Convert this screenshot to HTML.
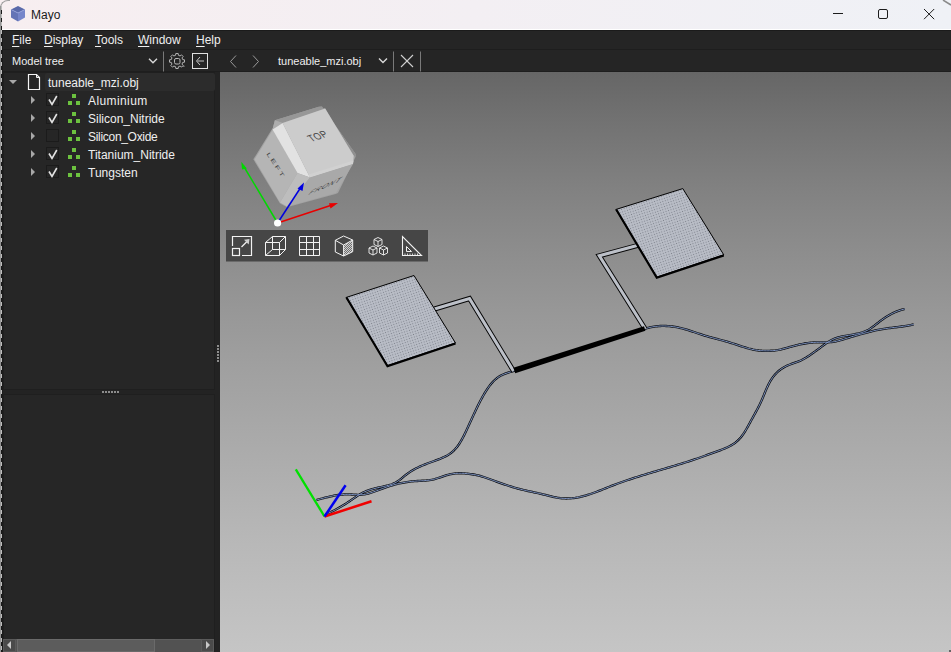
<!DOCTYPE html>
<html><head><meta charset="utf-8">
<style>
*{margin:0;padding:0;box-sizing:border-box}
html,body{width:951px;height:652px;overflow:hidden;background:#232323}
body{position:relative;font-family:"Liberation Sans",sans-serif;font-size:12px;color:#efefef}
.abs{position:absolute}
#title{left:0;top:0;width:951px;height:30px;background:linear-gradient(90deg,#f7eef0 0%,#f3eff3 50%,#eff1f6 100%);border-bottom:1px solid #ffffff}
#title .t{left:31px;top:8px;color:#1a1a1a;font-size:12px}
#menubar{left:0;top:30px;width:951px;height:20px;background:#252525;border-top:1px solid #1b1b1b;border-bottom:1px solid #1e1e1e}
#menubar span{position:absolute;top:2px;white-space:nowrap}
#toolbar{left:0;top:50px;width:951px;height:22px;background:#252525;border-bottom:1px solid #1e1e1e}
#leftpanel{left:0;top:72px;width:220px;height:580px;background:#232323}
#vp{left:220px;top:72px;width:731px;height:580px;background:linear-gradient(180deg,#666666 0%,#747474 10%,#818181 20%,#8c8c8c 30%,#969696 40%,#9f9f9f 50%,#a7a7a7 60%,#afafaf 70%,#b7b7b7 80%,#bebebe 90%,#c5c5c5 100%);overflow:hidden}
.row{position:absolute;white-space:nowrap}
.u{text-decoration:underline;text-underline-offset:2px;text-decoration-thickness:1.3px}
</style></head>
<body>
<div id="title" class="abs">
  <svg class="abs" style="left:11px;top:6px" width="15" height="16" viewBox="0 0 15 16">
    <polygon points="7,0 14,3.5 7,7 0,3.5" fill="#5a6aaa"/>
    <polygon points="0,3.5 7,7 7,15.5 0,11.5" fill="#6474b6"/>
    <polygon points="7,7 14,3.5 14,11.5 7,15.5" fill="#7686ca"/>
    <path d="M0.3,3.6 L7,7 L13.7,3.6" fill="none" stroke="#95a3dc" stroke-width="0.8"/>
  </svg>
  <svg class="abs" style="left:820px;top:0" width="131" height="30" viewBox="820 0 131 30">
    <line x1="833" y1="13.5" x2="843" y2="13.5" stroke="#1c1c1c" stroke-width="1"/>
    <rect x="878.5" y="9.5" width="9" height="9" rx="1.5" fill="none" stroke="#1c1c1c" stroke-width="1"/>
    <path d="M924,9 L934.2,19.2 M934.2,9 L924,19.2" stroke="#1c1c1c" stroke-width="1"/>
    <path d="M943,0 L951,5" stroke="#8a8a8a" stroke-width="1.5"/>
  </svg>
  <div class="abs t">Mayo</div>
</div>
<div id="menubar" class="abs">
  <span style="left:12px"><span style="position:static" class="u">F</span>ile</span>
  <span style="left:44px"><span style="position:static" class="u">D</span>isplay</span>
  <span style="left:95px"><span style="position:static" class="u">T</span>ools</span>
  <span style="left:138px"><span style="position:static" class="u">W</span>indow</span>
  <span style="left:196px"><span style="position:static" class="u">H</span>elp</span>
</div>
<div id="toolbar" class="abs">
  <div class="abs" style="left:12px;top:5px;white-space:nowrap;font-size:11px">Model tree</div>
  <svg class="abs" style="left:0;top:0" width="951" height="22" viewBox="0 50 951 22">
    <g fill="none" stroke-linecap="square">
      <polyline points="149.5,59.2 153,62.7 156.5,59.2" stroke="#d8d8d8" stroke-width="1.4"/>
      <line x1="163.5" y1="52" x2="163.5" y2="71" stroke="#7a7a7a" stroke-width="1"/>
      <rect x="192.5" y="53.5" width="15" height="15" stroke="#e0e0e0" stroke-width="1"/>
      <polyline points="200,57 196.5,61 200,65" stroke="#c8c8c8" stroke-width="1" stroke-linecap="butt"/>
      <line x1="197" y1="61" x2="204" y2="61" stroke="#8a8a8a" stroke-width="1.6" stroke-linecap="butt"/>
      <polyline points="236,55.5 230.5,61.5 236,67.5" stroke="#9a9a9a" stroke-width="1" stroke-linecap="butt"/>
      <polyline points="253,55.5 258.5,61.5 253,67.5" stroke="#9a9a9a" stroke-width="1" stroke-linecap="butt"/>
      <polyline points="379.5,59 383,62.5 386.5,59" stroke="#d8d8d8" stroke-width="1.4"/>
      <line x1="393.5" y1="52" x2="393.5" y2="71" stroke="#7a7a7a" stroke-width="1"/>
      <line x1="401" y1="55" x2="413" y2="67" stroke="#d0d0d0" stroke-width="1.1" stroke-linecap="butt"/>
      <line x1="413" y1="55" x2="401" y2="67" stroke="#d0d0d0" stroke-width="1.1" stroke-linecap="butt"/>
      <line x1="420.5" y1="52" x2="420.5" y2="71" stroke="#7a7a7a" stroke-width="1"/>
    </g>
    <path id="gear" fill="none" stroke="#b4b4b4" stroke-width="1" d="M182.74,59.62 L184.51,59.81 L184.51,62.19 L182.74,62.38 L182.03,64.08 L183.15,65.47 L181.47,67.15 L180.08,66.03 L178.38,66.74 L178.19,68.51 L175.81,68.51 L175.62,66.74 L173.92,66.03 L172.53,67.15 L170.85,65.47 L171.97,64.08 L171.26,62.38 L169.49,62.19 L169.49,59.81 L171.26,59.62 L171.97,57.92 L170.85,56.53 L172.53,54.85 L173.92,55.97 L175.62,55.26 L175.81,53.49 L178.19,53.49 L178.38,55.26 L180.08,55.97 L181.47,54.85 L183.15,56.53 L182.03,57.92Z"/>
    <rect x="174.5" y="58.5" width="5.5" height="5.5" rx="1.5" fill="none" stroke="#b8b8b8" stroke-width="1"/>
    <path d="M181,67 l3,-1.5 l1,1 z" fill="#9a9a9a"/>
  </svg>
  <div class="abs" style="left:278px;top:5px;white-space:nowrap;font-size:11px">tuneable_mzi.obj</div>
</div>
<div id="leftpanel" class="abs">
  <div class="abs" style="left:3px;top:0;width:212px;height:318px;background:#262626;border:1px solid #1f1f1f"></div>
  <div class="abs" style="left:3px;top:322px;width:212px;height:258px;background:#262626;border:1px solid #1f1f1f"></div>
  <div class="abs" style="left:45px;top:1px;width:170px;height:18px;background:#2c2c2c;border-radius:2px"></div>
  <svg class="abs" style="left:0;top:0" width="220" height="580" viewBox="0 0 220 580">
    <polygon points="9,8 17,8 13,12" fill="#a8a8a8"/>
    <path d="M28.5,2.5 H36.5 L39.5,5.5 V17.5 H28.5 Z" fill="none" stroke="#f4f4f4" stroke-width="1.2"/>
    <path d="M36.5,2.5 V5.5 H39.5" fill="none" stroke="#f4f4f4" stroke-width="1"/>
    <polygon points="31,24 35,28 31,32" fill="#a8a8a8"/><rect x="46.5" y="21.5" width="12" height="12" fill="#262626" stroke="#1b1b1b" stroke-width="1"/><polyline points="49,27.5 52,32.5 56.8,24" fill="none" stroke="#e2e2e2" stroke-width="1.6" stroke-linejoin="miter"/><rect x="72" y="22" width="4" height="4" fill="#6cc23f"/><rect x="68" y="29" width="4" height="4" fill="#6cc23f"/><rect x="76" y="29" width="4" height="4" fill="#6cc23f"/><polygon points="31,42 35,46 31,50" fill="#a8a8a8"/><rect x="46.5" y="39.5" width="12" height="12" fill="#262626" stroke="#1b1b1b" stroke-width="1"/><polyline points="49,45.5 52,50.5 56.8,42" fill="none" stroke="#e2e2e2" stroke-width="1.6" stroke-linejoin="miter"/><rect x="72" y="40" width="4" height="4" fill="#6cc23f"/><rect x="68" y="47" width="4" height="4" fill="#6cc23f"/><rect x="76" y="47" width="4" height="4" fill="#6cc23f"/><polygon points="31,60 35,64 31,68" fill="#a8a8a8"/><rect x="46.5" y="57.5" width="12" height="12" fill="#262626" stroke="#1b1b1b" stroke-width="1"/><rect x="72" y="58" width="4" height="4" fill="#6cc23f"/><rect x="68" y="65" width="4" height="4" fill="#6cc23f"/><rect x="76" y="65" width="4" height="4" fill="#6cc23f"/><polygon points="31,78 35,82 31,86" fill="#a8a8a8"/><rect x="46.5" y="75.5" width="12" height="12" fill="#262626" stroke="#1b1b1b" stroke-width="1"/><polyline points="49,81.5 52,86.5 56.8,78" fill="none" stroke="#e2e2e2" stroke-width="1.6" stroke-linejoin="miter"/><rect x="72" y="76" width="4" height="4" fill="#6cc23f"/><rect x="68" y="83" width="4" height="4" fill="#6cc23f"/><rect x="76" y="83" width="4" height="4" fill="#6cc23f"/><polygon points="31,96 35,100 31,104" fill="#a8a8a8"/><rect x="46.5" y="93.5" width="12" height="12" fill="#262626" stroke="#1b1b1b" stroke-width="1"/><polyline points="49,99.5 52,104.5 56.8,96" fill="none" stroke="#e2e2e2" stroke-width="1.6" stroke-linejoin="miter"/><rect x="72" y="94" width="4" height="4" fill="#6cc23f"/><rect x="68" y="101" width="4" height="4" fill="#6cc23f"/><rect x="76" y="101" width="4" height="4" fill="#6cc23f"/>
    <g fill="#8c8c8c"><rect x="217" y="273" width="2" height="2"/><rect x="217" y="276" width="2" height="2"/><rect x="217" y="279" width="2" height="2"/><rect x="217" y="282" width="2" height="2"/><rect x="217" y="285" width="2" height="2"/><rect x="217" y="288" width="2" height="2"/></g>
    <g fill="#8c8c8c"><rect x="102" y="319" width="2" height="2"/><rect x="105" y="319" width="2" height="2"/><rect x="108" y="319" width="2" height="2"/><rect x="111" y="319" width="2" height="2"/><rect x="114" y="319" width="2" height="2"/><rect x="117" y="319" width="2" height="2"/></g>
  </svg>
  <div class="row" style="left:48px;top:4px">tuneable_mzi.obj</div>
  <div class="row" style="left:88px;top:22px;letter-spacing:0.4px">Aluminium</div><div class="row" style="left:88px;top:40px">Silicon_Nitride</div><div class="row" style="left:88px;top:58px;letter-spacing:-0.3px">Silicon_Oxide</div><div class="row" style="left:88px;top:76px">Titanium_Nitride</div><div class="row" style="left:88px;top:94px">Tungsten</div>
  <div class="abs" style="left:3px;top:567px;width:211px;height:13px;background:#525252;border-top:1px solid #5e5e5e"></div>
  <div class="abs" style="left:3px;top:567px;width:13px;height:13px;background:#4a4a4a;border:1px solid #5a5a5a"></div>
  <div class="abs" style="left:17px;top:567px;width:138px;height:13px;background:#5c5c5c;border:1px solid #6a6a6a"></div>
  <div class="abs" style="left:201px;top:567px;width:13px;height:13px;background:#4a4a4a;border:1px solid #5a5a5a"></div>
  <svg class="abs" style="left:0;top:0" width="220" height="580" viewBox="0 0 220 580">
    <polygon points="7,573 11,569 11,577" fill="#c8c8c8"/>
    <polygon points="210,573 206,569 206,577" fill="#c8c8c8"/>
  </svg>
</div>
<div id="vp" class="abs">
<!--SCENE-->
<svg class="abs" style="left:0;top:0" width="731" height="580" viewBox="220 72 731 580">
<defs><pattern id="dots" width="2.6" height="2.6" patternUnits="userSpaceOnUse" patternTransform="rotate(-18)"><rect width="2.6" height="2.6" fill="#b9bdc7"/><rect x="0.8" y="0.8" width="1" height="1" fill="#7d818a"/></pattern></defs>
<path d="M325.80,514.20 L327.19,513.63 L328.58,513.04 L329.96,512.43 L331.32,511.80 L332.68,511.15 L334.03,510.48 L335.37,509.79 L336.70,509.08 L338.02,508.35 L339.33,507.61 L340.63,506.85 L341.92,506.08 L343.21,505.30 L344.49,504.51 L345.76,503.70 L347.03,502.88 L348.29,502.06 L349.54,501.23 L350.79,500.38 L352.04,499.54 L353.28,498.68 L354.51,497.82 L355.75,496.96 L356.99,496.11 L358.25,495.28 L359.52,494.47 L360.82,493.71 L362.14,492.99 L363.49,492.32 L364.86,491.70 L366.25,491.12 L367.66,490.59 L369.08,490.09 L370.52,489.63 L371.96,489.20 L373.41,488.80 L374.87,488.42 L376.33,488.06 L377.80,487.72 L379.27,487.39 L380.74,487.07 L382.21,486.75 L383.68,486.43 L385.15,486.09 L386.61,485.74 L388.07,485.36 L389.52,484.94 L390.95,484.48 L392.37,483.97 L393.76,483.40 L395.13,482.77 L396.46,482.06 L397.74,481.28 L398.98,480.42 L400.19,479.52 L401.37,478.58 L402.53,477.62 L403.68,476.66 L404.85,475.70 L406.03,474.76 L407.23,473.86 L408.46,472.98 L409.70,472.14 L410.97,471.32 L412.25,470.54 L413.56,469.78 L414.87,469.05 L416.20,468.35 L417.55,467.67 L418.91,467.02 L420.28,466.39 L421.65,465.78 L423.04,465.20 L424.44,464.63 L425.84,464.08 L427.24,463.54 L428.65,463.01 L430.07,462.49 L431.48,461.98 L432.90,461.47 L434.32,460.96 L435.74,460.45 L437.15,459.93 L438.56,459.39 L439.96,458.85 L441.35,458.27 L442.73,457.67 L444.10,457.05 L445.45,456.38 L446.78,455.67 L448.09,454.92 L449.36,454.11 L450.60,453.25 L451.79,452.34 L452.93,451.36 L454.03,450.32 L455.07,449.24 L456.07,448.11 L457.02,446.94 L457.92,445.73 L458.79,444.50 L459.62,443.25 L460.42,441.97 L461.18,440.67 L461.92,439.36 L462.64,438.04 L463.34,436.70 L464.02,435.36 L464.68,434.01 L465.34,432.65 L465.99,431.29 L466.63,429.93 L467.27,428.57 L467.91,427.20 L468.54,425.83 L469.17,424.47 L469.80,423.10 L470.43,421.73 L471.06,420.36 L471.68,418.99 L472.31,417.62 L472.94,416.25 L473.57,414.89 L474.20,413.52 L474.84,412.15 L475.47,410.79 L476.12,409.43 L476.77,408.07 L477.42,406.71 L478.08,405.36 L478.75,404.01 L479.43,402.67 L480.12,401.33 L480.82,399.99 L481.53,398.67 L482.26,397.35 L483.00,396.03 L483.75,394.73 L484.51,393.43 L485.30,392.14 L486.09,390.87 L486.91,389.60 L487.75,388.35 L488.61,387.11 L489.49,385.90 L490.41,384.70 L491.37,383.54 L492.35,382.40 L493.38,381.30 L494.45,380.24 L495.57,379.23 L496.73,378.27 L497.94,377.37 L499.19,376.54 L500.49,375.78 L501.83,375.09 L503.21,374.47 L504.60,373.91 L506.02,373.39 L507.44,372.91 L508.88,372.44 L510.31,371.99 L511.75,371.53 L513.18,371.06 L514.60,370.57 L516.01,370.03 M644.01,329.13 L645.43,328.65 L646.87,328.21 L648.32,327.81 L649.78,327.45 L651.24,327.13 L652.72,326.85 L654.20,326.60 L655.69,326.40 L657.18,326.24 L658.68,326.11 L660.18,326.02 L661.68,325.96 L663.18,325.94 L664.69,325.96 L666.19,326.01 L667.69,326.09 L669.18,326.20 L670.68,326.34 L672.17,326.51 L673.66,326.72 L675.15,326.95 L676.63,327.21 L678.10,327.49 L679.57,327.80 L681.03,328.14 L682.49,328.50 L683.94,328.89 L685.39,329.29 L686.83,329.72 L688.27,330.16 L689.70,330.61 L691.13,331.08 L692.55,331.55 L693.98,332.03 L695.40,332.52 L696.82,333.00 L698.24,333.48 L699.67,333.96 L701.09,334.43 L702.52,334.89 L703.96,335.35 L705.39,335.78 L706.84,336.21 L708.28,336.62 L709.73,337.03 L711.17,337.43 L712.62,337.82 L714.08,338.20 L715.53,338.59 L716.98,338.97 L718.43,339.35 L719.89,339.74 L721.34,340.12 L722.79,340.51 L724.24,340.91 L725.69,341.32 L727.13,341.73 L728.57,342.15 L730.01,342.59 L731.44,343.03 L732.87,343.49 L734.30,343.96 L735.73,344.43 L737.16,344.90 L738.58,345.37 L740.01,345.85 L741.43,346.31 L742.86,346.77 L744.30,347.22 L745.74,347.66 L747.18,348.08 L748.62,348.49 L750.08,348.87 L751.53,349.23 L753.00,349.57 L754.47,349.86 L755.95,350.12 L757.44,350.33 L758.93,350.50 L760.43,350.63 L761.93,350.73 L763.43,350.79 L764.93,350.82 L766.43,350.83 L767.94,350.83 L769.44,350.80 L770.94,350.75 L772.44,350.67 L773.94,350.56 L775.43,350.41 L776.92,350.22 L778.40,349.97 L779.88,349.67 L781.34,349.34 L782.80,348.97 L784.25,348.59 L785.70,348.19 L787.15,347.79 L788.59,347.39 L790.04,346.98 L791.49,346.59 L792.94,346.19 L794.39,345.81 L795.85,345.43 L797.30,345.07 L798.76,344.71 L800.23,344.38 L801.70,344.06 L803.17,343.77 L804.65,343.50 L806.13,343.25 L807.61,343.03 L809.10,342.84 L810.60,342.67 L812.09,342.54 L813.59,342.43 L815.09,342.36 L816.59,342.31 L818.10,342.30 L819.60,342.29 L821.10,342.30 L822.60,342.31 L824.11,342.32 L825.61,342.31 L827.11,342.28 L828.61,342.23 L830.11,342.14 L831.61,342.01 L833.10,341.83 L834.58,341.59 L836.06,341.31 L837.53,340.99 L838.99,340.63 L840.44,340.25 L841.88,339.84 L843.32,339.41 L844.76,338.96 L846.19,338.51 L847.62,338.06 L849.05,337.60 L850.49,337.15 L851.92,336.71 L853.36,336.28 L854.80,335.86 L856.25,335.45 L857.69,335.04 L859.14,334.64 L860.59,334.25 L862.04,333.86 L863.49,333.47 L864.95,333.08 L866.40,332.70 L867.85,332.32 L869.30,331.93 L870.76,331.55 L872.21,331.18 L873.67,330.82 L875.13,330.47 L876.60,330.15 L878.07,329.85 L879.55,329.57 L881.03,329.31 L882.51,329.06 L883.99,328.83 L885.48,328.61 L886.97,328.40 L888.46,328.19 L889.95,328.00 L891.44,327.81 L892.93,327.62 L894.42,327.44 L895.91,327.26 L897.40,327.07 L898.89,326.88 L900.38,326.69 L901.87,326.49 L903.36,326.27 L904.84,326.05 L906.33,325.82 L907.81,325.57 L909.29,325.31 L910.76,325.03 L912.23,324.72 L913.70,324.40 M316.30,500.00 L317.76,499.63 L319.21,499.25 L320.66,498.87 L322.12,498.49 L323.57,498.11 L325.02,497.73 L326.48,497.37 L327.94,497.01 L329.40,496.66 L330.86,496.33 L332.33,496.02 L333.81,495.72 L335.28,495.45 L336.77,495.21 L338.25,495.00 L339.74,494.82 L341.24,494.67 L342.74,494.55 L344.24,494.46 L345.74,494.40 L347.24,494.37 L348.74,494.38 L350.24,494.42 L351.74,494.49 L353.24,494.57 L354.74,494.66 L356.24,494.73 L357.74,494.78 L359.24,494.80 L360.75,494.76 L362.24,494.66 L363.74,494.48 L365.22,494.24 L366.69,493.94 L368.15,493.58 L369.60,493.18 L371.03,492.74 L372.46,492.27 L373.88,491.78 L375.29,491.27 L376.70,490.74 L378.10,490.21 L379.51,489.68 L380.91,489.15 L382.32,488.63 L383.73,488.12 L385.15,487.62 L386.57,487.13 L387.99,486.65 L389.42,486.18 L390.85,485.73 L392.29,485.29 L393.73,484.87 L395.18,484.47 L396.63,484.09 L398.09,483.73 L399.56,483.40 L401.02,483.08 L402.50,482.79 L403.97,482.52 L405.46,482.27 L406.94,482.04 L408.43,481.83 L409.92,481.64 L411.41,481.48 L412.90,481.33 L414.40,481.20 L415.90,481.09 L417.40,480.99 L418.90,480.91 L420.40,480.84 L421.90,480.77 L423.40,480.69 L424.90,480.59 L426.40,480.48 L427.89,480.33 L429.38,480.15 L430.87,479.92 L432.34,479.64 L433.81,479.31 L435.26,478.92 L436.70,478.49 L438.13,478.03 L439.55,477.56 L440.97,477.07 L442.39,476.58 L443.81,476.09 L445.24,475.62 L446.68,475.18 L448.12,474.77 L449.58,474.41 L451.05,474.10 L452.53,473.84 L454.01,473.62 L455.51,473.46 L457.00,473.34 L458.50,473.27 L460.01,473.24 L461.51,473.26 L463.01,473.32 L464.51,473.42 L466.00,473.54 L467.50,473.69 L468.99,473.86 L470.48,474.05 L471.97,474.26 L473.45,474.49 L474.93,474.74 L476.41,475.03 L477.87,475.35 L479.33,475.72 L480.78,476.12 L482.22,476.55 L483.65,477.01 L485.07,477.49 L486.49,477.98 L487.91,478.48 L489.32,478.99 L490.73,479.50 L492.14,480.02 L493.55,480.53 L494.97,481.04 L496.38,481.55 L497.79,482.06 L499.21,482.57 L500.62,483.07 L502.04,483.57 L503.46,484.06 L504.88,484.55 L506.30,485.03 L507.73,485.51 L509.15,485.97 L510.58,486.43 L512.02,486.87 L513.46,487.31 L514.90,487.73 L516.34,488.14 L517.79,488.54 L519.24,488.92 L520.70,489.29 L522.16,489.65 L523.62,490.00 L525.08,490.34 L526.55,490.68 L528.01,491.01 L529.48,491.33 L530.95,491.65 L532.41,491.97 L533.88,492.29 L535.35,492.61 L536.82,492.93 L538.28,493.25 L539.75,493.58 L541.21,493.92 L542.68,494.26 L544.14,494.61 L545.59,494.97 L547.05,495.34 L548.50,495.71 L549.96,496.09 L551.42,496.45 L552.88,496.81 L554.34,497.14 L555.81,497.45 L557.29,497.73 L558.77,497.96 L560.26,498.16 L561.75,498.30 L563.25,498.41 L564.75,498.47 L566.25,498.49 L567.76,498.47 L569.26,498.42 L570.76,498.32 L572.25,498.19 L573.74,498.02 L575.23,497.82 L576.72,497.58 L578.19,497.32 L579.67,497.02 L581.13,496.69 L582.59,496.34 L584.05,495.96 L585.49,495.56 L586.93,495.14 L588.37,494.69 L589.80,494.23 L591.22,493.75 L592.64,493.26 L594.06,492.76 L595.47,492.24 L596.87,491.71 L598.27,491.17 L599.67,490.63 L601.07,490.08 L602.47,489.52 L603.86,488.96 L605.26,488.40 L606.65,487.84 L608.04,487.29 L609.44,486.73 L610.84,486.18 L612.24,485.63 L613.64,485.09 L615.04,484.56 L616.45,484.04 L617.86,483.52 L619.27,483.00 L620.68,482.49 L622.10,481.99 L623.52,481.49 L624.94,481.00 L626.36,480.52 L627.78,480.03 L629.20,479.56 L630.63,479.08 L632.06,478.62 L633.49,478.15 L634.91,477.69 L636.35,477.23 L637.78,476.78 L639.21,476.33 L640.65,475.89 L642.08,475.44 L643.52,475.00 L644.95,474.56 L646.39,474.13 L647.83,473.69 L649.27,473.26 L650.71,472.83 L652.14,472.40 L653.58,471.97 L655.02,471.55 L656.47,471.12 L657.91,470.69 L659.35,470.27 L660.79,469.85 L662.23,469.42 L663.67,469.00 L665.11,468.57 L666.55,468.15 L667.99,467.72 L669.43,467.29 L670.87,466.87 L672.31,466.44 L673.75,466.01 L675.19,465.57 L676.62,465.14 L678.06,464.70 L679.50,464.26 L680.93,463.82 L682.37,463.37 L683.80,462.93 L685.23,462.47 L686.67,462.02 L688.10,461.56 L689.53,461.10 L690.95,460.63 L692.38,460.16 L693.80,459.69 L695.23,459.21 L696.65,458.72 L698.07,458.23 L699.49,457.74 L700.90,457.24 L702.32,456.73 L703.73,456.22 L705.14,455.71 L706.55,455.19 L707.96,454.68 L709.37,454.16 L710.78,453.64 L712.19,453.13 L713.61,452.61 L715.02,452.10 L716.43,451.59 L717.85,451.09 L719.26,450.57 L720.67,450.05 L722.07,449.52 L723.47,448.97 L724.86,448.41 L726.24,447.81 L727.61,447.19 L728.96,446.54 L730.29,445.85 L731.61,445.12 L732.89,444.34 L734.14,443.51 L735.36,442.63 L736.53,441.69 L737.66,440.69 L738.73,439.64 L739.76,438.55 L740.74,437.41 L741.67,436.24 L742.57,435.03 L743.44,433.80 L744.27,432.55 L745.07,431.28 L745.85,430.00 L746.61,428.71 L747.36,427.40 L748.09,426.09 L748.81,424.77 L749.53,423.45 L750.25,422.13 L750.97,420.82 L751.69,419.50 L752.42,418.19 L753.15,416.87 L753.88,415.56 L754.60,414.24 L755.33,412.93 L756.05,411.61 L756.76,410.29 L757.47,408.96 L758.16,407.63 L758.84,406.29 L759.51,404.95 L760.17,403.60 L760.80,402.24 L761.42,400.87 L762.02,399.49 L762.61,398.11 L763.19,396.72 L763.76,395.33 L764.33,393.94 L764.90,392.55 L765.48,391.17 L766.07,389.79 L766.67,388.41 L767.28,387.04 L767.92,385.68 L768.59,384.33 L769.28,383.00 L770.00,381.68 L770.76,380.39 L771.56,379.11 L772.40,377.87 L773.29,376.66 L774.22,375.48 L775.20,374.34 L776.23,373.25 L777.30,372.20 L778.42,371.20 L779.58,370.24 L780.78,369.33 L782.01,368.47 L783.28,367.67 L784.58,366.92 L785.91,366.22 L787.27,365.58 L788.65,364.99 L790.05,364.45 L791.46,363.93 L792.87,363.43 L794.30,362.94 L795.71,362.45 L797.13,361.95 L798.53,361.42 L799.93,360.85 L801.30,360.24 L802.64,359.57 L803.97,358.86 L805.27,358.11 L806.55,357.33 L807.81,356.52 L809.06,355.68 L810.30,354.83 L811.53,353.97 L812.76,353.11 L813.99,352.24 L815.21,351.37 L816.43,350.49 L817.64,349.61 L818.86,348.72 L820.07,347.83 L821.27,346.94 L822.48,346.04 L823.68,345.15 L824.89,344.26 L826.11,343.38 L827.35,342.53 L828.61,341.71 L829.89,340.93 L831.21,340.20 L832.55,339.53 L833.93,338.93 L835.33,338.39 L836.75,337.90 L838.19,337.47 L839.64,337.08 L841.10,336.72 L842.56,336.40 L844.04,336.10 L845.51,335.82 L846.99,335.56 L848.47,335.31 L849.95,335.06 L851.43,334.81 L852.91,334.55 L854.39,334.28 L855.87,334.00 L857.34,333.69 L858.80,333.35 L860.25,332.97 L861.70,332.55 L863.12,332.09 L864.53,331.57 L865.92,330.99 L867.28,330.35 L868.60,329.64 L869.89,328.87 L871.15,328.05 L872.37,327.18 L873.58,326.29 L874.77,325.37 L875.95,324.44 L877.12,323.50 L878.30,322.57 L879.49,321.65 L880.68,320.74 L881.89,319.85 L883.12,318.98 L884.36,318.13 L885.61,317.30 L886.88,316.50 L888.16,315.72 L889.46,314.97 L890.78,314.24 L892.11,313.55 L893.46,312.89 L894.83,312.27 L896.21,311.68 L897.61,311.13 L899.02,310.62 L900.45,310.15 L901.89,309.72 L903.34,309.34 L904.80,309.00" fill="none" stroke="#0a0c10" stroke-width="2.3" stroke-linecap="butt" stroke-linejoin="round"/>
<path d="M325.80,514.20 L327.19,513.63 L328.58,513.04 L329.96,512.43 L331.32,511.80 L332.68,511.15 L334.03,510.48 L335.37,509.79 L336.70,509.08 L338.02,508.35 L339.33,507.61 L340.63,506.85 L341.92,506.08 L343.21,505.30 L344.49,504.51 L345.76,503.70 L347.03,502.88 L348.29,502.06 L349.54,501.23 L350.79,500.38 L352.04,499.54 L353.28,498.68 L354.51,497.82 L355.75,496.96 L356.99,496.11 L358.25,495.28 L359.52,494.47 L360.82,493.71 L362.14,492.99 L363.49,492.32 L364.86,491.70 L366.25,491.12 L367.66,490.59 L369.08,490.09 L370.52,489.63 L371.96,489.20 L373.41,488.80 L374.87,488.42 L376.33,488.06 L377.80,487.72 L379.27,487.39 L380.74,487.07 L382.21,486.75 L383.68,486.43 L385.15,486.09 L386.61,485.74 L388.07,485.36 L389.52,484.94 L390.95,484.48 L392.37,483.97 L393.76,483.40 L395.13,482.77 L396.46,482.06 L397.74,481.28 L398.98,480.42 L400.19,479.52 L401.37,478.58 L402.53,477.62 L403.68,476.66 L404.85,475.70 L406.03,474.76 L407.23,473.86 L408.46,472.98 L409.70,472.14 L410.97,471.32 L412.25,470.54 L413.56,469.78 L414.87,469.05 L416.20,468.35 L417.55,467.67 L418.91,467.02 L420.28,466.39 L421.65,465.78 L423.04,465.20 L424.44,464.63 L425.84,464.08 L427.24,463.54 L428.65,463.01 L430.07,462.49 L431.48,461.98 L432.90,461.47 L434.32,460.96 L435.74,460.45 L437.15,459.93 L438.56,459.39 L439.96,458.85 L441.35,458.27 L442.73,457.67 L444.10,457.05 L445.45,456.38 L446.78,455.67 L448.09,454.92 L449.36,454.11 L450.60,453.25 L451.79,452.34 L452.93,451.36 L454.03,450.32 L455.07,449.24 L456.07,448.11 L457.02,446.94 L457.92,445.73 L458.79,444.50 L459.62,443.25 L460.42,441.97 L461.18,440.67 L461.92,439.36 L462.64,438.04 L463.34,436.70 L464.02,435.36 L464.68,434.01 L465.34,432.65 L465.99,431.29 L466.63,429.93 L467.27,428.57 L467.91,427.20 L468.54,425.83 L469.17,424.47 L469.80,423.10 L470.43,421.73 L471.06,420.36 L471.68,418.99 L472.31,417.62 L472.94,416.25 L473.57,414.89 L474.20,413.52 L474.84,412.15 L475.47,410.79 L476.12,409.43 L476.77,408.07 L477.42,406.71 L478.08,405.36 L478.75,404.01 L479.43,402.67 L480.12,401.33 L480.82,399.99 L481.53,398.67 L482.26,397.35 L483.00,396.03 L483.75,394.73 L484.51,393.43 L485.30,392.14 L486.09,390.87 L486.91,389.60 L487.75,388.35 L488.61,387.11 L489.49,385.90 L490.41,384.70 L491.37,383.54 L492.35,382.40 L493.38,381.30 L494.45,380.24 L495.57,379.23 L496.73,378.27 L497.94,377.37 L499.19,376.54 L500.49,375.78 L501.83,375.09 L503.21,374.47 L504.60,373.91 L506.02,373.39 L507.44,372.91 L508.88,372.44 L510.31,371.99 L511.75,371.53 L513.18,371.06 L514.60,370.57 L516.01,370.03 M644.01,329.13 L645.43,328.65 L646.87,328.21 L648.32,327.81 L649.78,327.45 L651.24,327.13 L652.72,326.85 L654.20,326.60 L655.69,326.40 L657.18,326.24 L658.68,326.11 L660.18,326.02 L661.68,325.96 L663.18,325.94 L664.69,325.96 L666.19,326.01 L667.69,326.09 L669.18,326.20 L670.68,326.34 L672.17,326.51 L673.66,326.72 L675.15,326.95 L676.63,327.21 L678.10,327.49 L679.57,327.80 L681.03,328.14 L682.49,328.50 L683.94,328.89 L685.39,329.29 L686.83,329.72 L688.27,330.16 L689.70,330.61 L691.13,331.08 L692.55,331.55 L693.98,332.03 L695.40,332.52 L696.82,333.00 L698.24,333.48 L699.67,333.96 L701.09,334.43 L702.52,334.89 L703.96,335.35 L705.39,335.78 L706.84,336.21 L708.28,336.62 L709.73,337.03 L711.17,337.43 L712.62,337.82 L714.08,338.20 L715.53,338.59 L716.98,338.97 L718.43,339.35 L719.89,339.74 L721.34,340.12 L722.79,340.51 L724.24,340.91 L725.69,341.32 L727.13,341.73 L728.57,342.15 L730.01,342.59 L731.44,343.03 L732.87,343.49 L734.30,343.96 L735.73,344.43 L737.16,344.90 L738.58,345.37 L740.01,345.85 L741.43,346.31 L742.86,346.77 L744.30,347.22 L745.74,347.66 L747.18,348.08 L748.62,348.49 L750.08,348.87 L751.53,349.23 L753.00,349.57 L754.47,349.86 L755.95,350.12 L757.44,350.33 L758.93,350.50 L760.43,350.63 L761.93,350.73 L763.43,350.79 L764.93,350.82 L766.43,350.83 L767.94,350.83 L769.44,350.80 L770.94,350.75 L772.44,350.67 L773.94,350.56 L775.43,350.41 L776.92,350.22 L778.40,349.97 L779.88,349.67 L781.34,349.34 L782.80,348.97 L784.25,348.59 L785.70,348.19 L787.15,347.79 L788.59,347.39 L790.04,346.98 L791.49,346.59 L792.94,346.19 L794.39,345.81 L795.85,345.43 L797.30,345.07 L798.76,344.71 L800.23,344.38 L801.70,344.06 L803.17,343.77 L804.65,343.50 L806.13,343.25 L807.61,343.03 L809.10,342.84 L810.60,342.67 L812.09,342.54 L813.59,342.43 L815.09,342.36 L816.59,342.31 L818.10,342.30 L819.60,342.29 L821.10,342.30 L822.60,342.31 L824.11,342.32 L825.61,342.31 L827.11,342.28 L828.61,342.23 L830.11,342.14 L831.61,342.01 L833.10,341.83 L834.58,341.59 L836.06,341.31 L837.53,340.99 L838.99,340.63 L840.44,340.25 L841.88,339.84 L843.32,339.41 L844.76,338.96 L846.19,338.51 L847.62,338.06 L849.05,337.60 L850.49,337.15 L851.92,336.71 L853.36,336.28 L854.80,335.86 L856.25,335.45 L857.69,335.04 L859.14,334.64 L860.59,334.25 L862.04,333.86 L863.49,333.47 L864.95,333.08 L866.40,332.70 L867.85,332.32 L869.30,331.93 L870.76,331.55 L872.21,331.18 L873.67,330.82 L875.13,330.47 L876.60,330.15 L878.07,329.85 L879.55,329.57 L881.03,329.31 L882.51,329.06 L883.99,328.83 L885.48,328.61 L886.97,328.40 L888.46,328.19 L889.95,328.00 L891.44,327.81 L892.93,327.62 L894.42,327.44 L895.91,327.26 L897.40,327.07 L898.89,326.88 L900.38,326.69 L901.87,326.49 L903.36,326.27 L904.84,326.05 L906.33,325.82 L907.81,325.57 L909.29,325.31 L910.76,325.03 L912.23,324.72 L913.70,324.40 M316.30,500.00 L317.76,499.63 L319.21,499.25 L320.66,498.87 L322.12,498.49 L323.57,498.11 L325.02,497.73 L326.48,497.37 L327.94,497.01 L329.40,496.66 L330.86,496.33 L332.33,496.02 L333.81,495.72 L335.28,495.45 L336.77,495.21 L338.25,495.00 L339.74,494.82 L341.24,494.67 L342.74,494.55 L344.24,494.46 L345.74,494.40 L347.24,494.37 L348.74,494.38 L350.24,494.42 L351.74,494.49 L353.24,494.57 L354.74,494.66 L356.24,494.73 L357.74,494.78 L359.24,494.80 L360.75,494.76 L362.24,494.66 L363.74,494.48 L365.22,494.24 L366.69,493.94 L368.15,493.58 L369.60,493.18 L371.03,492.74 L372.46,492.27 L373.88,491.78 L375.29,491.27 L376.70,490.74 L378.10,490.21 L379.51,489.68 L380.91,489.15 L382.32,488.63 L383.73,488.12 L385.15,487.62 L386.57,487.13 L387.99,486.65 L389.42,486.18 L390.85,485.73 L392.29,485.29 L393.73,484.87 L395.18,484.47 L396.63,484.09 L398.09,483.73 L399.56,483.40 L401.02,483.08 L402.50,482.79 L403.97,482.52 L405.46,482.27 L406.94,482.04 L408.43,481.83 L409.92,481.64 L411.41,481.48 L412.90,481.33 L414.40,481.20 L415.90,481.09 L417.40,480.99 L418.90,480.91 L420.40,480.84 L421.90,480.77 L423.40,480.69 L424.90,480.59 L426.40,480.48 L427.89,480.33 L429.38,480.15 L430.87,479.92 L432.34,479.64 L433.81,479.31 L435.26,478.92 L436.70,478.49 L438.13,478.03 L439.55,477.56 L440.97,477.07 L442.39,476.58 L443.81,476.09 L445.24,475.62 L446.68,475.18 L448.12,474.77 L449.58,474.41 L451.05,474.10 L452.53,473.84 L454.01,473.62 L455.51,473.46 L457.00,473.34 L458.50,473.27 L460.01,473.24 L461.51,473.26 L463.01,473.32 L464.51,473.42 L466.00,473.54 L467.50,473.69 L468.99,473.86 L470.48,474.05 L471.97,474.26 L473.45,474.49 L474.93,474.74 L476.41,475.03 L477.87,475.35 L479.33,475.72 L480.78,476.12 L482.22,476.55 L483.65,477.01 L485.07,477.49 L486.49,477.98 L487.91,478.48 L489.32,478.99 L490.73,479.50 L492.14,480.02 L493.55,480.53 L494.97,481.04 L496.38,481.55 L497.79,482.06 L499.21,482.57 L500.62,483.07 L502.04,483.57 L503.46,484.06 L504.88,484.55 L506.30,485.03 L507.73,485.51 L509.15,485.97 L510.58,486.43 L512.02,486.87 L513.46,487.31 L514.90,487.73 L516.34,488.14 L517.79,488.54 L519.24,488.92 L520.70,489.29 L522.16,489.65 L523.62,490.00 L525.08,490.34 L526.55,490.68 L528.01,491.01 L529.48,491.33 L530.95,491.65 L532.41,491.97 L533.88,492.29 L535.35,492.61 L536.82,492.93 L538.28,493.25 L539.75,493.58 L541.21,493.92 L542.68,494.26 L544.14,494.61 L545.59,494.97 L547.05,495.34 L548.50,495.71 L549.96,496.09 L551.42,496.45 L552.88,496.81 L554.34,497.14 L555.81,497.45 L557.29,497.73 L558.77,497.96 L560.26,498.16 L561.75,498.30 L563.25,498.41 L564.75,498.47 L566.25,498.49 L567.76,498.47 L569.26,498.42 L570.76,498.32 L572.25,498.19 L573.74,498.02 L575.23,497.82 L576.72,497.58 L578.19,497.32 L579.67,497.02 L581.13,496.69 L582.59,496.34 L584.05,495.96 L585.49,495.56 L586.93,495.14 L588.37,494.69 L589.80,494.23 L591.22,493.75 L592.64,493.26 L594.06,492.76 L595.47,492.24 L596.87,491.71 L598.27,491.17 L599.67,490.63 L601.07,490.08 L602.47,489.52 L603.86,488.96 L605.26,488.40 L606.65,487.84 L608.04,487.29 L609.44,486.73 L610.84,486.18 L612.24,485.63 L613.64,485.09 L615.04,484.56 L616.45,484.04 L617.86,483.52 L619.27,483.00 L620.68,482.49 L622.10,481.99 L623.52,481.49 L624.94,481.00 L626.36,480.52 L627.78,480.03 L629.20,479.56 L630.63,479.08 L632.06,478.62 L633.49,478.15 L634.91,477.69 L636.35,477.23 L637.78,476.78 L639.21,476.33 L640.65,475.89 L642.08,475.44 L643.52,475.00 L644.95,474.56 L646.39,474.13 L647.83,473.69 L649.27,473.26 L650.71,472.83 L652.14,472.40 L653.58,471.97 L655.02,471.55 L656.47,471.12 L657.91,470.69 L659.35,470.27 L660.79,469.85 L662.23,469.42 L663.67,469.00 L665.11,468.57 L666.55,468.15 L667.99,467.72 L669.43,467.29 L670.87,466.87 L672.31,466.44 L673.75,466.01 L675.19,465.57 L676.62,465.14 L678.06,464.70 L679.50,464.26 L680.93,463.82 L682.37,463.37 L683.80,462.93 L685.23,462.47 L686.67,462.02 L688.10,461.56 L689.53,461.10 L690.95,460.63 L692.38,460.16 L693.80,459.69 L695.23,459.21 L696.65,458.72 L698.07,458.23 L699.49,457.74 L700.90,457.24 L702.32,456.73 L703.73,456.22 L705.14,455.71 L706.55,455.19 L707.96,454.68 L709.37,454.16 L710.78,453.64 L712.19,453.13 L713.61,452.61 L715.02,452.10 L716.43,451.59 L717.85,451.09 L719.26,450.57 L720.67,450.05 L722.07,449.52 L723.47,448.97 L724.86,448.41 L726.24,447.81 L727.61,447.19 L728.96,446.54 L730.29,445.85 L731.61,445.12 L732.89,444.34 L734.14,443.51 L735.36,442.63 L736.53,441.69 L737.66,440.69 L738.73,439.64 L739.76,438.55 L740.74,437.41 L741.67,436.24 L742.57,435.03 L743.44,433.80 L744.27,432.55 L745.07,431.28 L745.85,430.00 L746.61,428.71 L747.36,427.40 L748.09,426.09 L748.81,424.77 L749.53,423.45 L750.25,422.13 L750.97,420.82 L751.69,419.50 L752.42,418.19 L753.15,416.87 L753.88,415.56 L754.60,414.24 L755.33,412.93 L756.05,411.61 L756.76,410.29 L757.47,408.96 L758.16,407.63 L758.84,406.29 L759.51,404.95 L760.17,403.60 L760.80,402.24 L761.42,400.87 L762.02,399.49 L762.61,398.11 L763.19,396.72 L763.76,395.33 L764.33,393.94 L764.90,392.55 L765.48,391.17 L766.07,389.79 L766.67,388.41 L767.28,387.04 L767.92,385.68 L768.59,384.33 L769.28,383.00 L770.00,381.68 L770.76,380.39 L771.56,379.11 L772.40,377.87 L773.29,376.66 L774.22,375.48 L775.20,374.34 L776.23,373.25 L777.30,372.20 L778.42,371.20 L779.58,370.24 L780.78,369.33 L782.01,368.47 L783.28,367.67 L784.58,366.92 L785.91,366.22 L787.27,365.58 L788.65,364.99 L790.05,364.45 L791.46,363.93 L792.87,363.43 L794.30,362.94 L795.71,362.45 L797.13,361.95 L798.53,361.42 L799.93,360.85 L801.30,360.24 L802.64,359.57 L803.97,358.86 L805.27,358.11 L806.55,357.33 L807.81,356.52 L809.06,355.68 L810.30,354.83 L811.53,353.97 L812.76,353.11 L813.99,352.24 L815.21,351.37 L816.43,350.49 L817.64,349.61 L818.86,348.72 L820.07,347.83 L821.27,346.94 L822.48,346.04 L823.68,345.15 L824.89,344.26 L826.11,343.38 L827.35,342.53 L828.61,341.71 L829.89,340.93 L831.21,340.20 L832.55,339.53 L833.93,338.93 L835.33,338.39 L836.75,337.90 L838.19,337.47 L839.64,337.08 L841.10,336.72 L842.56,336.40 L844.04,336.10 L845.51,335.82 L846.99,335.56 L848.47,335.31 L849.95,335.06 L851.43,334.81 L852.91,334.55 L854.39,334.28 L855.87,334.00 L857.34,333.69 L858.80,333.35 L860.25,332.97 L861.70,332.55 L863.12,332.09 L864.53,331.57 L865.92,330.99 L867.28,330.35 L868.60,329.64 L869.89,328.87 L871.15,328.05 L872.37,327.18 L873.58,326.29 L874.77,325.37 L875.95,324.44 L877.12,323.50 L878.30,322.57 L879.49,321.65 L880.68,320.74 L881.89,319.85 L883.12,318.98 L884.36,318.13 L885.61,317.30 L886.88,316.50 L888.16,315.72 L889.46,314.97 L890.78,314.24 L892.11,313.55 L893.46,312.89 L894.83,312.27 L896.21,311.68 L897.61,311.13 L899.02,310.62 L900.45,310.15 L901.89,309.72 L903.34,309.34 L904.80,309.00" fill="none" stroke="#9cb6ee" stroke-width="0.8" stroke-linecap="butt" stroke-linejoin="round"/>
<polyline points="434.5,309 469.5,298.5 513.5,371" fill="none" stroke="#050505" stroke-width="5.0" stroke-linejoin="miter" stroke-linecap="butt"/>
<polyline points="638,245.3 599.3,255.8 645.2,329" fill="none" stroke="#050505" stroke-width="5.0" stroke-linejoin="miter" stroke-linecap="butt"/>
<polyline points="434.5,309 469.5,298.5 513.5,371" fill="none" stroke="#bcc0c8" stroke-width="3.1" stroke-linejoin="miter" stroke-linecap="butt"/>
<polyline points="638,245.3 599.3,255.8 645.2,329" fill="none" stroke="#bcc0c8" stroke-width="3.1" stroke-linejoin="miter" stroke-linecap="butt"/>
<polygon points="515.22,373.36 645.41,330.69 643.99,326.31 513.38,367.64" fill="#000"/>
<polygon points="346,297.5 414,275.5 455.5,343 387.5,365.5" fill="url(#dots)" stroke="#000" stroke-width="1" stroke-linejoin="miter"/>
<polyline points="346.5,297.5 387.5,366.3 455.5,343.5" fill="none" stroke="#000" stroke-width="2.2"/>
<polygon points="615.8,209.5 682.8,188.6 723.8,254.9 656.8,277" fill="url(#dots)" stroke="#000" stroke-width="1" stroke-linejoin="miter"/>
<polyline points="616.3,209.5 656.8,277.8 723.8,255.4" fill="none" stroke="#000" stroke-width="2.2"/>
<line x1="324.5" y1="516.5" x2="295.8" y2="469.4" stroke="#00e000" stroke-width="2.3"/>
<line x1="324.5" y1="516.5" x2="371.5" y2="501.3" stroke="#f00000" stroke-width="2.5"/>
<line x1="324.5" y1="516.5" x2="345.6" y2="485.2" stroke="#0000f0" stroke-width="2.5"/>
</svg>
<!--CUBE-->
<svg class="abs" style="left:0;top:0" width="731" height="580" viewBox="220 72 731 580">
<polygon points="274.9,120.3 318.8,106.8 322,106.5 356,154.5 355.5,157 338,193 335.6,194 287,207.2 280,203.5 253.3,159.3 273,127.6" fill="#a2a2a2" />
<polygon points="274.9,120.3 318.8,106.8 325.2,108.6 282.6,123" fill="#979797" />
<polygon points="274.9,120.3 282.6,123 272.6,129.5 273,127.6" fill="#adadad" />
<polygon points="318.8,106.8 322,106.5 356,154.5 355.5,157 353.7,155.8 325.2,108.6" fill="#909090" />
<polygon points="273.2,129 297.5,173 280,202.5 254.5,159.5" fill="#b5b5b5" />
<polygon points="272.6,129.5 282.6,123 310,177.5 297.5,173" fill="#e2e2e2" />
<polygon points="282.6,123 325.2,108.6 353.7,155.8 353,163.9 310,177.5" fill="#cccccc" />
<polygon points="310,177.5 353,163.9 353.5,160.5 308.5,174.5" fill="#d1d1d1" />
<polygon points="297.5,173 310,177.5 287,206.5 280,202.5" fill="#bdbdbd" />
<polygon points="310,177.5 353,164 336,193 287,206.5" fill="#a9a9a9" />
<text x="0" y="0" transform="translate(320.5,139) rotate(-19) skewX(22) scale(0.9,1.1)" font-family="Liberation Sans" font-size="9.5" fill="#2e2e2e" text-anchor="middle" letter-spacing="0.6" opacity="0.85">TOP</text>
<text x="0" y="0" transform="translate(274.5,166.5) rotate(57) scale(1,0.6)" font-family="Liberation Sans" font-size="9" fill="#2a2a2a" text-anchor="middle" letter-spacing="2" opacity="0.85">LEFT</text>
<text x="0" y="0" transform="translate(323.5,188.5) rotate(-24) scale(1,0.5) skewX(-45)" font-family="Liberation Sans" font-size="9" fill="#2a2a2a" text-anchor="middle" letter-spacing="0.8" opacity="0.85">FRONT</text>
<line x1="277.6" y1="223" x2="243.5" y2="166" stroke="#00d800" stroke-width="1.5"/>
<polygon points="241.3,161.8 246.8,168.5 242,169.5" fill="#00d800" />
<line x1="277.6" y1="223" x2="332" y2="205" stroke="#e80000" stroke-width="1.5"/>
<polygon points="338,203 329,203.2 330.5,208.5" fill="#e80000" />
<line x1="277.6" y1="223" x2="301" y2="187" stroke="#0000e0" stroke-width="1.5"/>
<polygon points="304,182.5 297.5,188.5 302.5,191" fill="#0000e0" />
<circle cx="277.6" cy="223" r="3.6" fill="#ffffff"/>
<rect x="226" y="230" width="202" height="31.5" fill="#464646"/>
<path d="M232.5,246 V236.5 H251.5 V255.5 H242" stroke="#f2f2f2" stroke-width="1.2" fill="none"/>
<rect x="232.5" y="248.5" width="7" height="7" stroke="#f2f2f2" stroke-width="1.2" fill="none"/>
<path d="M241.5,247 L248.5,240" stroke="#f2f2f2" stroke-width="1.2" fill="none"/>
<polygon points="249.5,239 244,239.8 248.7,244.5" fill="#cfcfcf"/>
<path d="M265.5,242.5 H279.5 V255.5 H265.5 Z M272.5,236.5 H285.5 V249.5 H272.5 Z M265.5,242.5 L272.5,236.5 M279.5,242.5 L285.5,236.5 M279.5,255.5 L285.5,249.5 M265.5,255.5 L272.5,249.5" stroke="#f2f2f2" stroke-width="1" fill="none"/>
<path d="M299.5,236.5 H319.5 V255.5 H299.5 Z M306.5,236.5 V255.5 M313.5,236.5 V255.5 M299.5,242.5 H319.5 M299.5,249.5 H319.5" stroke="#f2f2f2" stroke-width="1" fill="none"/>
<defs><pattern id="chk" width="2" height="2" patternUnits="userSpaceOnUse"><rect width="2" height="2" fill="#6e6e6e"/><rect width="1" height="1" fill="#d0d0d0"/><rect x="1" y="1" width="1" height="1" fill="#d0d0d0"/></pattern></defs>
<polygon points="343.6,245 352.7,240 352.7,251.7 343.6,256" fill="url(#chk)"/>
<path d="M343.6,236 L352.7,240 V251.7 L343.6,256 L335.3,252 V240.3 Z M335.3,240.3 L343.6,245 L352.7,240 M343.6,245 V256" stroke="#f2f2f2" stroke-width="1" fill="none"/>
<path d="M378,237.5 L382,239.5 V244.5 L378,246.5 L374,244.5 V239.5 Z M374,239.5 L378,241.5 L382,239.5 M378,241.5 V246.5" stroke="#f2f2f2" stroke-width="0.9" fill="none"/>
<path d="M373,246 L377,248 V253 L373,255 L369,253 V248 Z M369,248 L373,250 L377,248 M373,250 V255" stroke="#f2f2f2" stroke-width="0.9" fill="none"/>
<path d="M383.5,246 L387.5,248 V253 L383.5,255 L379.5,253 V248 Z M379.5,248 L383.5,250 L387.5,248 M383.5,250 V255" stroke="#f2f2f2" stroke-width="0.9" fill="none"/>
<path d="M402.5,236.5 V255.5 H421.5 Z" stroke="#f2f2f2" stroke-width="1.1" fill="none"/>
<path d="M406.5,246.5 V251.5 H411.5 Z" stroke="#f2f2f2" stroke-width="1" fill="none"/>
<path d="M405,255.5 V253.5 M407.5,255.5 V253.5 M410,255.5 V253.5 M412.5,255.5 V253.5 M415,255.5 V253.5 M417.5,255.5 V253.5 " stroke="#f2f2f2" stroke-width="0.8" fill="none"/>
</svg>
<!--END-->
</div>
<div class="abs" style="left:0;top:0;width:10px;height:10px;border-top-left-radius:8px;border-top:1px solid #a0a0a0;border-left:1px solid #a0a0a0"></div>
<div class="abs" style="left:0;top:6px;width:1px;height:646px;background:#959595"></div>
<div class="abs" style="left:1px;top:6px;width:1px;height:646px;background:repeating-linear-gradient(180deg,#bdbdbd 0 4px,#1a1a1a 4px 8px)"></div>
<div class="abs" style="left:2px;top:30px;width:1px;height:622px;background:#1c1c1c"></div>
<div class="abs" style="left:949px;top:650px;width:2px;height:2px;background:#666"></div>
</body></html>
